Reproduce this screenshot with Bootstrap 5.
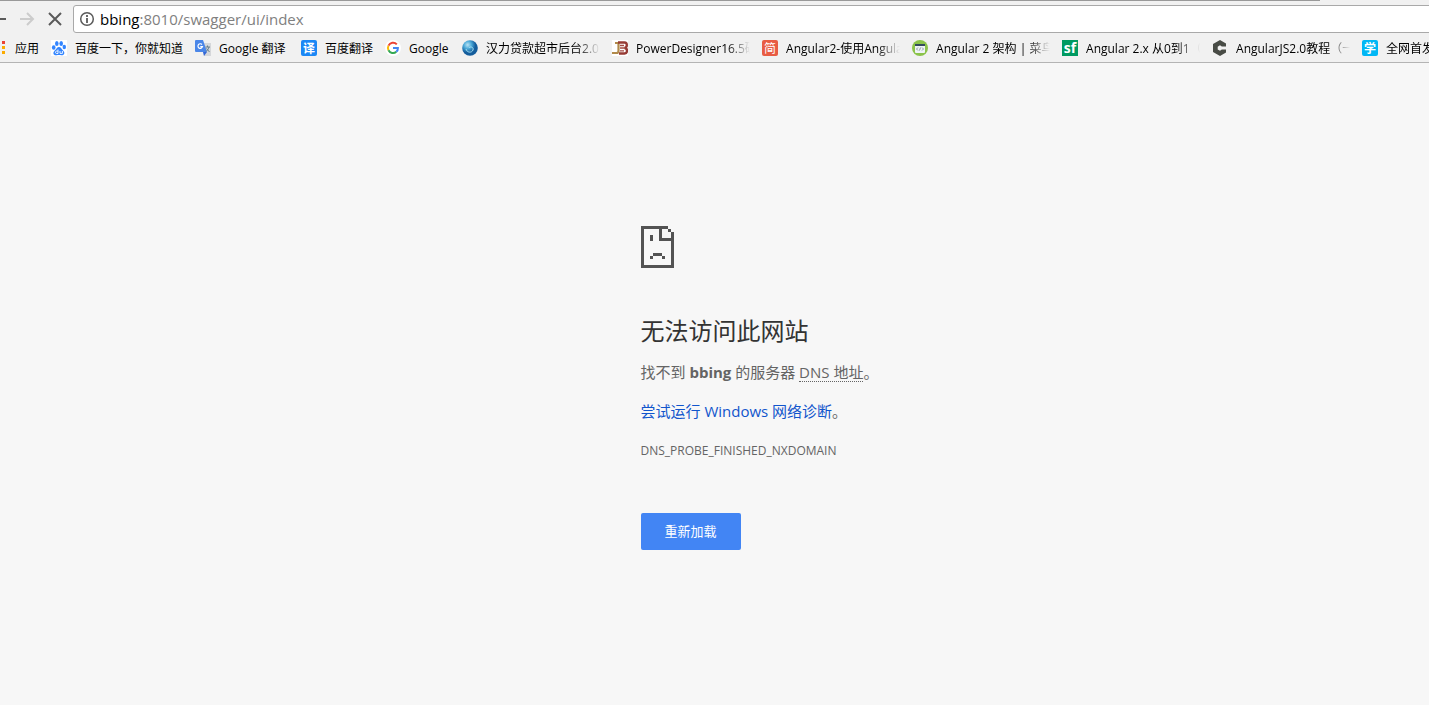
<!DOCTYPE html>
<html lang="zh-CN">
<head>
<meta charset="utf-8">
<meta name="viewport" content="width=device-width, initial-scale=1">
<title>bbing:8010/swagger/ui/index</title>
<link href="https://cdn.jsdelivr.net/npm/bootstrap@5.3.0/dist/css/bootstrap.min.css" rel="stylesheet">
<style>
body{background:#f7f7f7;color:#646464;font-family:"Open Sans","Noto Sans CJK SC",sans-serif;font-size:15px;line-height:20px;overflow-x:hidden}
.chrome{background:#f1f1f1;border-bottom:1px solid #b4b4b4;overflow:hidden}
.tabline{height:1px;background:#999;width:92.4%}
.tools{height:32px;padding-top:4px}
.tool{width:28px;height:28px;border:0;padding:0;background:none;color:#5a5a5a;display:flex;align-items:center;justify-content:center;flex:none}
.tool:disabled{color:#ccc}
.tool-back{margin-left:-15px}
.omni{height:28px;margin-left:4px;margin-right:-8px;border:1px solid #a9a9a9;border-radius:3px;background:#fff;padding-left:5px}
.url{position:relative;height:26px;font-size:15px;line-height:26px;margin-left:5px}
.url input{width:100%;height:26px;border:0;padding:0;outline:0;color:transparent;background:none;position:absolute;inset:0}
.url span{color:#808080}.url b{font-weight:400;color:#000}
.marks{height:29px;font-size:12px;margin-left:-10px;gap:12px}
.bm{color:#000;text-decoration:none;display:flex;align-items:center;gap:8px;flex:none;white-space:nowrap;line-height:20px}
.bm svg{flex:none}
.bm span{padding-top:2px}
.bm-translate{min-width:94px}
.bm-google{min-width:65px}
.bm.cut{width:138px}
.cut span{flex:1;min-width:0;overflow:hidden;-webkit-mask-image:linear-gradient(90deg,#000 80%,transparent);mask-image:linear-gradient(90deg,#000 80%,transparent)}
.err{margin-left:calc(50% - 74px);padding-top:163px}
.err h1{font-size:24px;line-height:30px;color:#333;margin:48px 0 16px}
.err p{margin-bottom:19px}
.err abbr{text-decoration:none;border-bottom:1px dotted #646464;cursor:help;padding:0;display:inline-block;line-height:17px}
.err a{color:#1155cc;text-decoration:none}
.err .code{font-size:12px;line-height:22px}
.btn-reload{background:#4285f4;color:#fff;border:0;border-radius:2px;font-size:13px;line-height:21px;padding:8px 23px;min-width:100px;margin-top:32px}
.btn-reload:hover{background:#3b78e7;color:#fff}
svg text{font-family:"Open Sans","Noto Sans CJK SC",sans-serif;font-weight:700;fill:#fff;text-anchor:middle}
</style>
</head>
<body>
<header class="chrome">
  <div class="tabline"></div>
  <div class="tools d-flex">
    <button class="tool tool-back" type="button" aria-label="后退"><svg width="16" height="16" fill="none" stroke="currentColor" stroke-width="2"><path d="M15 8H2M8 2L2 8l6 6"/></svg></button>
    <button class="tool" type="button" aria-label="前进" disabled><svg width="16" height="16" fill="none" stroke="currentColor" stroke-width="2"><path d="M1 8h13M8 2l6 6-6 6"/></svg></button>
    <button class="tool" type="button" aria-label="停止"><svg width="16" height="16" fill="none" stroke="currentColor" stroke-width="2"><path d="M2 2l12 12M14 2L2 14"/></svg></button>
    <div class="omni d-flex align-items-center flex-grow-1">
      <svg width="16" height="16" fill="none" stroke="#5a5a5a"><circle cx="8" cy="8" r="6.3" stroke-width="1.5"/><path d="M8 7v5M8 4v2" stroke-width="1.8"/></svg>
      <div class="url flex-grow-1"><b>bbing</b><span>:8010/swagger/ui/index</span><input type="text" aria-label="地址"></div>
    </div>
  </div>
  <nav class="marks d-flex align-items-center" aria-label="书签">
    <a class="bm" href="#"><svg width="17" height="16"><path fill="#fbbc05" d="M2 6h3v3H2z"/><path fill="#ea4335" d="M12 1h3v3h-3z"/><path fill="#fbab00" d="M12 6h3v3h-3zM12 11h3v3h-3z"/></svg><span>应用</span></a>
    <a class="bm" href="#"><svg width="16" height="16"><path fill="#fff" d="M0 0h16v16H0z"/><g fill="#3385ff"><ellipse cx="2.7" cy="7.5" rx="1.8" ry="2.3"/><ellipse cx="5.8" cy="3.6" rx="1.8" ry="2.5"/><ellipse cx="10.2" cy="3.6" rx="1.8" ry="2.5"/><ellipse cx="13.3" cy="7" rx="1.7" ry="2.3"/><path d="M8 7c2 0 2.500 2 4.300 3.700 2.500 2.800 0 5-2 4.600-1.500-.4-3-.4-4.600 0-2.500.5-4.700-2-2.200-4.600C5.500 9 6 7 8 7z"/></g><path d="M7 9.500v4H5.500c-1.300 0-1.300-2.400 0-2.400H7M9 11v2.400h2.400V11" fill="none" stroke="#fff" stroke-width=".9"/></svg><span>百度一下，你就知道</span></a>
    <a class="bm bm-translate" href="#"><svg width="16" height="16"><path fill="#d5d7da" d="M6 3h10v13H9z"/><path fill="#4a86e8" d="M1 0h7l4 12H1a1 1 0 0 1-1-1V1a1 1 0 0 1 1-1z"/><path fill="#3367d6" d="M8 12h4l-3 4z"/><path d="M7 4.500a2.300 2.300 0 1 0 .5 2.200H5.300" fill="none" stroke="#fff" stroke-width="1.200"/><path d="M10.500 7H15M12.500 5.500V7M14 7q-.8 3-3 4.500M11.500 8.500l3 3.500" fill="none" stroke="#667f8d"/></svg><span>Google 翻译</span></a>
    <a class="bm" href="#"><svg width="16" height="16"><rect width="16" height="16" rx="2" fill="#1b87f5"/><text x="8" y="12.500" font-size="12">译</text></svg><span>百度翻译</span></a>
    <a class="bm bm-google" href="#"><svg width="16" height="16"><circle cx="8" cy="8" r="8" fill="#fff"/><g fill="none" stroke-width="2"><path stroke="#ea4335" d="M11.800 4.300A5 5 0 0 0 3.500 5.700"/><path stroke="#fbbc05" d="M3.500 5.700a5 5 0 0 0 0 4.600"/><path stroke="#34a853" d="M3.500 10.300a5 5 0 0 0 7.800 1.500"/><path stroke="#4285f4" d="M11.300 11.800Q13 10.300 12.900 8H8"/></g></svg><span>Google</span></a>
    <a class="bm cut" href="#"><svg width="16" height="16"><defs><radialGradient id="orb" cx="35%" cy="30%"><stop stop-color="#b9e2f3"/><stop offset=".5" stop-color="#4ba9d8"/><stop offset="1" stop-color="#145d9c"/></radialGradient></defs><circle cx="8" cy="8" r="7.800" fill="url(#orb)"/><path d="M4 9c1 4 6 4 7 1 1-3-3-4-4-2" fill="none" stroke="#a5dff2" stroke-width="1"/></svg><span>汉力贷款超市后台2.0</span></a>
    <a class="bm cut" href="#"><svg width="16" height="16"><path fill="#fff" d="M0 0h16v16H0z"/><path d="M3 3h3.500v8q0 2-2 2H0" fill="none" stroke="#b18a4b" stroke-width="2.200"/><path d="M6 2.500h6.500q2.300 0 2.300 2.600T12.500 8q2.500 0 2.500 2.700T12.500 13.500H7" fill="none" stroke="#963b35" stroke-width="2.400"/><path d="M8 8h5M8 5.500h4M8 10.800h4" fill="none" stroke="#a34a42" stroke-width="1.300"/></svg><span>PowerDesigner16.5破解</span></a>
    <a class="bm cut" href="#"><svg width="16" height="16"><rect width="16" height="16" rx="2" fill="#e85c43"/><text x="8" y="12.500" font-size="12" style="font-weight:400">简</text></svg><span>Angular2-使用Angular</span></a>
    <a class="bm cut" href="#"><svg width="16" height="16"><circle cx="8" cy="8" r="8" fill="#8bc34a"/><rect x="3" y="4" width="10" height="9" rx="1" fill="#eef3f5"/><path fill="#344b5d" d="M3 4h10v2H3z"/><path d="M6 7.500L4.500 9 6 10.500M10 7.500L11.500 9 10 10.500M8.500 7.500l-1 3" fill="none" stroke="#72818b" stroke-width=".8"/></svg><span>Angular 2 架构 | 菜鸟教程</span></a>
    <a class="bm cut" href="#"><svg width="16" height="16"><path fill="#009a61" d="M0 0h16v16H0z"/><text x="8" y="13" font-size="14">sf</text></svg><span>Angular 2.x 从0到1（一）</span></a>
    <a class="bm cut" href="#"><svg width="16" height="16"><path fill="#484b45" d="M8 0l6 3.500v3h-4.200L8 5.300 5.700 6.700v2.800L8 10.800l1.800-1.300H14v3L8 16l-7-4V4z"/></svg><span>AngularJS2.0教程（一）</span></a>
    <a class="bm cut" href="#"><svg width="16" height="16"><rect width="16" height="16" rx="2" fill="#00b7f5"/><text x="8" y="12.500" font-size="12">学</text></svg><span>全网首发Angular2</span></a>
  </nav>
</header>
<main class="err">
  <svg class="d-block" width="33" height="42" viewBox="0 0 11 14" shape-rendering="crispEdges" role="img" aria-label="错误"><path fill="#535353" d="M0 0h9v1H1v12h9V5H6V1h1v3h3V2h1v12H0zM9 1h1v1H9zM3 3h1v2H3zM4 9h3v1H4zM3 10h1v1H3zM7 10h1v1H7z"/></svg>
  <h1 class="fw-normal">无法访问此网站</h1>
  <p>找不到 <strong>bbing</strong> 的服务器 <abbr title="域名系统">DNS 地址</abbr>。</p>
  <p><a href="#">尝试运行 Windows 网络诊断</a>。</p>
  <p class="code">DNS_PROBE_FINISHED_NXDOMAIN</p>
  <button class="btn btn-reload" type="button">重新加载</button>
</main>
<script src="https://cdn.jsdelivr.net/npm/bootstrap@5.3.0/dist/js/bootstrap.bundle.min.js"></script>
</body>
</html>
